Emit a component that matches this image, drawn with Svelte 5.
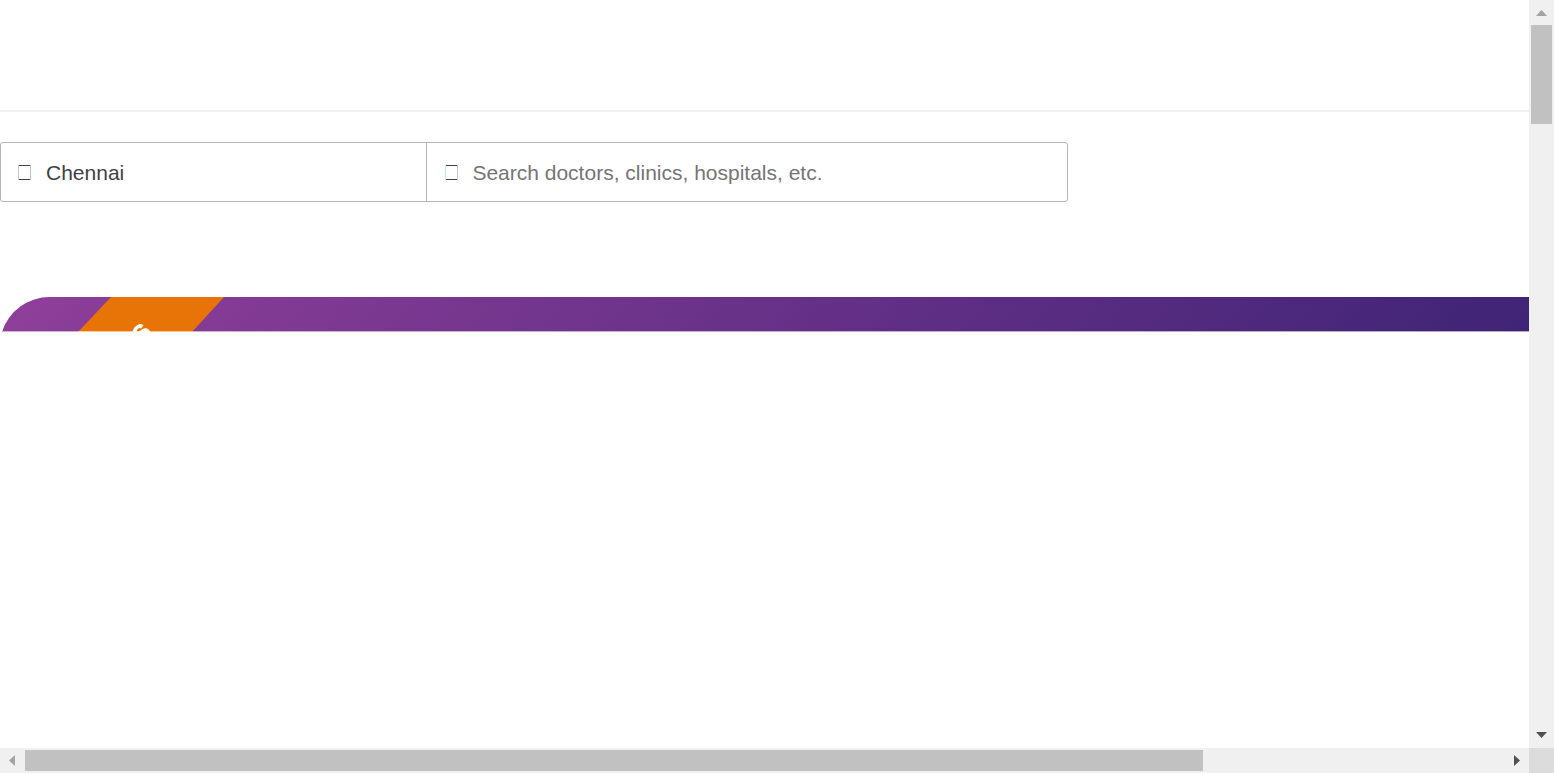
<script>
  let city = $state('Chennai');
  let query = $state('');
</script>

<div class="window">
  <main class="page">
    <header class="topbar"></header>

    <form class="search" onsubmit={(e) => e.preventDefault()}>
      <label class="field">
        <svg class="glyph" width="14" height="17" viewBox="0 0 14 17" shape-rendering="crispEdges" aria-hidden="true">
          <path d="M0 0h1v15H0z" fill="#cbc3c3" />
          <path d="M12 0h1v15h-1z" fill="#bcb8f6" />
          <path d="M1 0h11v1H1zM1 14h11v1H1z" fill="#414146" />
        </svg>
        <input type="text" aria-label="City" bind:value={city} />
      </label>
      <label class="field">
        <svg class="glyph" width="14" height="17" viewBox="0 0 14 17" shape-rendering="crispEdges" aria-hidden="true">
          <path d="M1 0h1v15H1z" fill="#b4eef0" />
          <path d="M13 0h1v15h-1z" fill="#c8c4c4" />
          <path d="M2 0h11v1H2zM2 14h11v1H2z" fill="#414146" />
        </svg>
        <input
          type="text"
          aria-label="Search"
          placeholder="Search doctors, clinics, hospitals, etc."
          bind:value={query}
        />
      </label>
    </form>

    <section class="banner">
      <svg class="ribbon" width="240" height="35" viewBox="0 0 240 35" aria-hidden="true">
        <path d="M111 0H224L192 35H78Z" fill="#e87407" />
        <text x="142" y="46" transform="rotate(-47 142 46)">S</text>
      </svg>
    </section>
  </main>

  <div class="bar vertical">
    <button aria-label="Scroll up">
      <svg width="11" height="7" viewBox="0 0 11 7"><path d="M0 7L5.500 1L11 7Z" fill="#a3a3a3" /></svg>
    </button>
    <div class="track"><div class="thumb"></div></div>
    <button aria-label="Scroll down">
      <svg width="11" height="7" viewBox="0 0 11 7"><path d="M0 0H11L5.500 6Z" fill="#505050" /></svg>
    </button>
  </div>

  <div class="bar horizontal">
    <button aria-label="Scroll left">
      <svg width="7" height="11" viewBox="0 0 7 11"><path d="M6 0V11L0 5.500Z" fill="#a3a3a3" /></svg>
    </button>
    <div class="track"><div class="thumb"></div></div>
    <button aria-label="Scroll right">
      <svg width="7" height="11" viewBox="0 0 7 11"><path d="M1 0L7 5.500L1 11Z" fill="#505050" /></svg>
    </button>
  </div>

  <div class="corner"></div>
</div>

<style>
  :global(body) {
    margin: 0;
    background: #fff;
  }

  .window {
    display: grid;
    grid-template-columns: minmax(0, 1fr) 25px;
    grid-template-rows: minmax(0, 1fr) 25px;
    height: 100vh;
    font-family: 'Liberation Sans', Arial, sans-serif;
    font-size: 21px;
    color: #414146;
  }

  .page {
    overflow: hidden;
    background: #fff;
  }

  .topbar {
    height: 110px;
    border-bottom: 2px solid #f0f0f5;
  }

  .search {
    display: grid;
    grid-template-columns: 2fr 3fr;
    box-sizing: border-box;
    max-width: 1068px;
    height: 60px;
    margin-top: 30px;
    border: 1px solid #b4b4be;
    border-radius: 3px;
  }

  .field {
    display: flex;
    align-items: center;
    gap: 14px;
    min-width: 0;
    padding: 2px 17px 0;
  }

  .field:first-child {
    border-right: 1px solid #b4b4be;
  }

  .glyph {
    flex: none;
  }

  input {
    flex: 1;
    min-width: 0;
    padding: 0;
    border: 0;
    outline: 0;
    background: transparent;
    color: inherit;
    font: inherit;
    line-height: 24px;
  }

  input::placeholder {
    color: #757575;
    opacity: 1;
  }

  .banner {
    position: relative;
    height: 35px;
    margin-top: 95px;
    overflow: hidden;
    background: linear-gradient(130deg, #8f3f9a 0%, #3f2476 100%);
    clip-path: path('M2 35A50 50 0 0 1 50 0H9000V35Z');
  }

  .banner::after {
    content: '';
    position: absolute;
    inset: auto 0 0;
    height: 1px;
    background: rgb(255 255 255 / 60%);
  }

  .ribbon {
    display: block;
  }

  .ribbon text {
    fill: #fff;
    stroke: #fff;
    stroke-width: 1px;
    font-size: 22px;
    font-weight: 700;
  }

  .bar {
    display: flex;
    background: #f0f0f0;
  }

  .vertical {
    flex-direction: column;
  }

  .bar button {
    display: flex;
    flex: none;
    align-items: center;
    justify-content: center;
    width: 25px;
    height: 25px;
    padding: 0;
    border: 0;
    background: transparent;
  }

  .track {
    flex: 1;
    min-width: 0;
    min-height: 0;
  }

  .thumb {
    background: #c1c1c1;
  }

  .vertical .thumb {
    height: 14.2%;
    margin: 0 2px;
  }

  .horizontal .track {
    display: flex;
  }

  .horizontal .thumb {
    width: 79.65%;
    margin: 2px 0;
  }

  .corner {
    background: #dcdcdc;
  }
</style>
